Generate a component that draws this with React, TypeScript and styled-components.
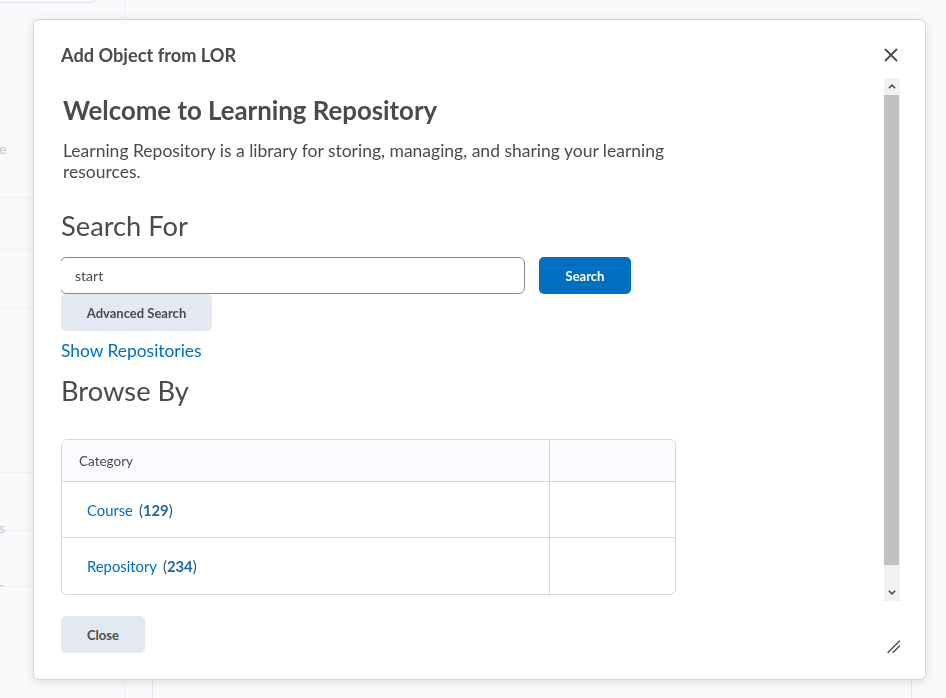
import React from "react";
import styled, { createGlobalStyle } from "styled-components";

const GlobalStyle = createGlobalStyle`
  html, body {
    margin: 0;
    padding: 0;
  }

  body {
    font-family: Lato, "Noto Sans", sans-serif;
    background: #f9fafc;
    color: #494c4e;
  }

  * {
    box-sizing: border-box;
  }
`;

const CATEGORIES = [
  { name: "Course", count: 129 },
  { name: "Repository", count: 234 },
];

export default function App() {
  return (
    <>
      <GlobalStyle />
      <Page>
        <Sidebar>
          <TopField />
          <SideRow $h={150}>
            <SideText>e</SideText>
          </SideRow>
          <SideRow $h={52} />
          <SideRow $h={58} />
          <SideRow $h={165} />
          <SideRow $h={58}>
            <SideText>s</SideText>
          </SideRow>
          <SideRow $h={56}>
            <SideText>-</SideText>
          </SideRow>
        </Sidebar>
        <Main>
          <MainBottom />
        </Main>
      </Page>

      <Dialog role="dialog" aria-label="Add Object from LOR">
        <Header>
          <Title>Add Object from LOR</Title>
          <IconButton aria-label="Close dialog">
            <svg width="14" height="14" viewBox="0 0 14 14">
              <path
                d="M1.5 1.5 L12.5 12.5 M12.5 1.5 L1.5 12.5"
                stroke="#494c4e"
                strokeWidth="1.8"
                strokeLinecap="round"
              />
            </svg>
          </IconButton>
        </Header>

        <Body>
          <Content>
            <Welcome>Welcome to Learning Repository</Welcome>
            <Intro>
              Learning Repository is a library for storing, managing, and
              sharing your learning resources.
            </Intro>

            <SectionHeading>Search For</SectionHeading>
            <SearchRow>
              <SearchInput defaultValue="start" />
              <Button $primary>Search</Button>
            </SearchRow>
            <Button>Advanced Search</Button>
            <TextLink href="#">Show Repositories</TextLink>

            <SectionHeading $browse>Browse By</SectionHeading>
            <Table>
              <colgroup>
                <col style={{ width: 487 }} />
                <col />
              </colgroup>
              <thead>
                <tr>
                  <HeadCell>Category</HeadCell>
                  <HeadCell />
                </tr>
              </thead>
              <tbody>
                {CATEGORIES.map((cat) => (
                  <tr key={cat.name}>
                    <Cell>
                      <RowLink href="#">{cat.name}</RowLink>
                      <Count>
                        (<b>{cat.count}</b>)
                      </Count>
                    </Cell>
                    <Cell />
                  </tr>
                ))}
              </tbody>
            </Table>
          </Content>

          <Scrollbar>
            <ScrollArrow>
              <svg width="8" height="5" viewBox="0 0 8 5">
                <path d="M0.8 4.3 L4 1.1 L7.2 4.3" stroke="#505050" strokeWidth="1.6" fill="none" />
              </svg>
            </ScrollArrow>
            <Thumb />
            <TrackRest />
            <ScrollArrow>
              <svg width="8" height="5" viewBox="0 0 8 5">
                <path d="M0.8 0.7 L4 3.9 L7.2 0.7" stroke="#505050" strokeWidth="1.6" fill="none" />
              </svg>
            </ScrollArrow>
          </Scrollbar>
        </Body>

        <Footer>
          <Button $w={84}>Close</Button>
        </Footer>

        <ResizeGrip width="13" height="13" viewBox="0 0 13 13">
          <path d="M1 12.5 L12.5 1 M6 12.5 L12.5 6" stroke="#494c4e" strokeWidth="1.4" strokeLinecap="round" />
        </ResizeGrip>
      </Dialog>
    </>
  );
}

const Page = styled.div`
  display: flex;
  width: 946px;
  height: 698px;
  overflow: hidden;
  background: #f9fafc;
`;

const Sidebar = styled.aside`
  width: 125px;
  flex-shrink: 0;
  border-right: 1px solid #eceef3;
  display: flex;
  flex-direction: column;
`;

const TopField = styled.div`
  width: 95px;
  height: 3px;
  border: 1px solid #e2e5ea;
  border-top: none;
  border-left: none;
  border-radius: 0 0 6px 0;
  margin-bottom: 45px;
`;

const SideRow = styled.div<{ $h: number }>`
  height: ${(p) => p.$h}px;
  border-bottom: 1px solid #eff1f5;
  display: flex;
  align-items: center;
  font-size: 14px;
  color: #c4c8cd;
`;

const SideText = styled.span`
  margin-left: -1px;
  margin-top: 52px;
`;

const Main = styled.main`
  flex: 1;
  display: flex;
  flex-direction: column;
  justify-content: flex-end;
  padding: 0 34px 0 27px;
`;

const MainBottom = styled.div`
  height: 18px;
  border-left: 1px solid #e8eaef;
  border-right: 1px solid #e8eaef;
`;

const Dialog = styled.div`
  position: fixed;
  left: 33px;
  top: 19px;
  width: 893px;
  height: 661px;
  background: #ffffff;
  border: 1px solid #d4d7dc;
  border-radius: 6px;
  box-shadow: 0 2px 10px rgba(0, 0, 0, 0.12);
  display: flex;
  flex-direction: column;
  padding: 0 26px 0 27px;
`;

const Header = styled.header`
  height: 58px;
  padding-top: 12px;
  display: flex;
  align-items: center;
  justify-content: space-between;
`;

const Title = styled.h2`
  margin: 0;
  font-size: 18.2px;
  line-height: 24px;
  font-weight: 700;
  color: #494c4e;
`;

const IconButton = styled.button`
  width: 24px;
  height: 24px;
  margin-right: -4px;
  padding: 0;
  border: none;
  background: transparent;
  display: flex;
  align-items: center;
  justify-content: center;
  cursor: pointer;
`;

const Body = styled.div`
  height: 523px;
  display: flex;
`;

const Content = styled.div`
  flex: 1;
  overflow: hidden;
  padding-top: 16px;
  display: flex;
  flex-direction: column;
  align-items: flex-start;
`;

const Welcome = styled.h1`
  margin: 0 0 14px 2px;
  font-size: 25.8px;
  line-height: 32px;
  font-weight: 700;
  color: #494c4e;
`;

const Intro = styled.p`
  margin: 0 0 0 2px;
  width: 640px;
  font-size: 17.5px;
  line-height: 21px;
  color: #494c4e;
`;

const SectionHeading = styled.h3<{ $browse?: boolean }>`
  margin: ${(p) => (p.$browse ? "13px 0 31px" : "27px 0 14px")};
  font-size: 27.3px;
  line-height: 34px;
  font-weight: 400;
  color: #494c4e;
`;

const SearchRow = styled.div`
  display: flex;
  align-items: center;
  gap: 14px;
  margin-left: -1px;
`;

const SearchInput = styled.input`
  width: 465px;
  height: 37px;
  border: 1px solid #868c8f;
  border-radius: 6px;
  padding: 0 14px;
  font-family: Lato, "Noto Sans", sans-serif;
  font-size: 14px;
  color: #494c4e;
  outline: none;
`;

const Button = styled.button<{ $primary?: boolean; $w?: number }>`
  height: 37px;
  width: ${(p) => (p.$w ? `${p.$w}px` : p.$primary ? "92px" : "151px")};
  padding: 0;
  border: none;
  border-radius: 5px;
  background: ${(p) => (p.$primary ? "#006fbf" : "#e3e9f1")};
  color: ${(p) => (p.$primary ? "#ffffff" : "#494c4e")};
  font-family: Lato, "Noto Sans", sans-serif;
  font-size: 13px;
  font-weight: 700;
  cursor: pointer;
`;

const TextLink = styled.a`
  margin-top: 9px;
  font-size: 17.4px;
  line-height: 21px;
  color: #006fbf;
  text-decoration: none;
`;

const Table = styled.table`
  width: 615px;
  border-collapse: separate;
  border-spacing: 0;
  border: 1px solid #d3d9e3;
  border-radius: 6px;
  overflow: hidden;
`;

const HeadCell = styled.th`
  height: 42px;
  padding: 0 17px;
  background: #f9fbff;
  border-bottom: 1px solid #d3d9e3;
  text-align: left;
  font-size: 13.5px;
  font-weight: 400;
  color: #494c4e;

  & + & {
    border-left: 1px solid #d3d9e3;
  }
`;

const Cell = styled.td`
  height: 56px;
  padding: 0 25px;
  font-size: 14.8px;
  color: #494c4e;

  & + & {
    border-left: 1px solid #d3d9e3;
  }

  tr:not(:last-child) > & {
    border-bottom: 1px solid #d3d9e3;
  }
`;

const RowLink = styled.a`
  color: #006fbf;
  text-decoration: none;
`;

const Count = styled.span`
  margin-left: 6px;
  color: #2a5478;

  b {
    color: #1a69a3;
  }
`;

const Scrollbar = styled.div`
  width: 16px;
  margin-right: -1px;
  display: flex;
  flex-direction: column;
  background: #f1f1f1;
`;

const ScrollArrow = styled.div`
  height: 17px;
  display: flex;
  align-items: center;
  justify-content: center;
  background: #f1f1f1;
`;

const Thumb = styled.div`
  height: 470px;
  margin: 0 1px 0 0;
  background: #c1c1c1;
`;

const TrackRest = styled.div`
  flex: 1;
`;

const Footer = styled.footer`
  padding-top: 15px;
`;

const ResizeGrip = styled.svg`
  position: absolute;
  right: 25px;
  bottom: 26px;
`;
